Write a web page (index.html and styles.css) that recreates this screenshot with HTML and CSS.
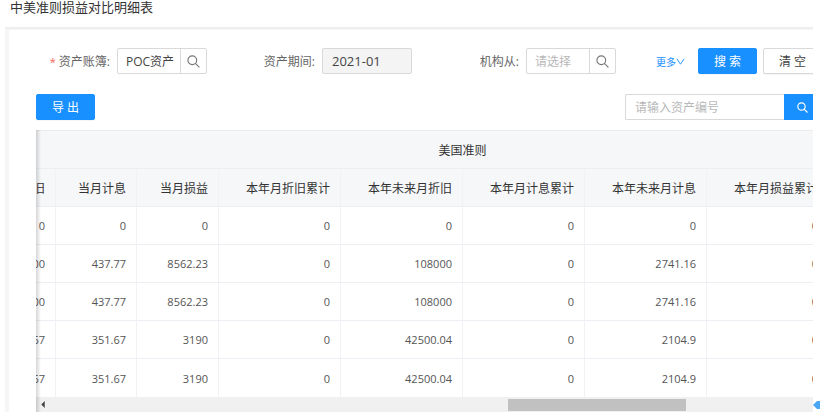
FILE: index.html
```html
<!DOCTYPE html>
<html lang="zh-CN">
<head>
  <meta charset="UTF-8">
  <meta name="viewport" content="width=device-width, initial-scale=1.0">
  <title>中美准则损益对比明细表</title>
  <link rel="stylesheet" href="styles.css">
</head>
<body>

  <h1 class="page-title">中美准则损益对比明细表</h1>

  <main class="page-body">
    <div class="panel">

      <!-- Filters -->
      <form class="filters">
        <div class="field">
          <label for="book"><span class="required">*</span> 资产账簿:</label>
          <div class="lookup">
            <input type="text" id="book" value="POC资产">
            <button type="button" aria-label="选择资产账簿">
              <svg class="icon" viewBox="0 0 14 14"><circle cx="5.7" cy="5.7" r="4.7"/><path d="M9 9L13.4 13.4"/></svg>
            </button>
          </div>
        </div>
        <div class="field">
          <label for="period">资产期间:</label>
          <input type="text" id="period" class="period" value="2021-01" disabled>
        </div>
        <div class="field">
          <label for="org">机构从:</label>
          <div class="lookup">
            <input type="text" id="org" placeholder="请选择">
            <button type="button" aria-label="选择机构">
              <svg class="icon" viewBox="0 0 14 14"><circle cx="5.7" cy="5.7" r="4.7"/><path d="M9 9L13.4 13.4"/></svg>
            </button>
          </div>
        </div>
        <div class="actions">
          <a href="#" class="more">更多<svg class="arrow" viewBox="0 0 10 10"><path d="M1 2L5 8L9 2"/></svg></a>
          <button type="submit" class="btn primary">搜 索</button>
          <button type="reset" class="btn">清 空</button>
        </div>
      </form>

      <!-- Toolbar -->
      <div class="toolbar">
        <button type="button" class="btn primary">导 出</button>
        <div class="search">
          <input type="text" placeholder="请输入资产编号" aria-label="资产编号">
          <button type="button" aria-label="搜索">
            <svg class="icon" viewBox="0 0 14 14"><circle cx="5.7" cy="5.7" r="4.7"/><path d="M9 9L13.4 13.4"/></svg>
          </button>
        </div>
      </div>

      <!-- Scrolled part of the table -->
      <div class="table-wrap">
        <table>
          <colgroup>
            <col class="narrow"><col class="narrow"><col class="medium">
            <col span="6" class="wide">
          </colgroup>
          <thead>
            <tr class="group"><th colspan="9">美国准则</th></tr>
            <tr>
              <th>当月折旧</th><th>当月计息</th><th>当月损益</th><th>本年月折旧累计</th>
              <th>本年未来月折旧</th><th>本年月计息累计</th><th>本年未来月计息</th><th>本年月损益累计</th><th></th>
            </tr>
          </thead>
          <tbody>
            <tr><td>0</td><td>0</td><td>0</td><td>0</td><td>0</td><td>0</td><td>0</td><td>0</td><td></td></tr>
            <tr><td>9000</td><td>437.77</td><td>8562.23</td><td>0</td><td>108000</td><td>0</td><td>2741.16</td><td>0</td><td></td></tr>
            <tr><td>9000</td><td>437.77</td><td>8562.23</td><td>0</td><td>108000</td><td>0</td><td>2741.16</td><td>0</td><td></td></tr>
            <tr><td>3541.67</td><td>351.67</td><td>3190</td><td>0</td><td>42500.04</td><td>0</td><td>2104.9</td><td>0</td><td></td></tr>
            <tr><td>3541.67</td><td>351.67</td><td>3190</td><td>0</td><td>42500.04</td><td>0</td><td>2104.9</td><td>0</td><td></td></tr>
          </tbody>
        </table>
        <div class="scrollbar">
          <svg class="scroll-left" viewBox="0 0 4 8"><path d="M4 0V8L0 4Z"/></svg>
          <div class="thumb"></div>
        </div>
      </div>

    </div>
  </main>

  <svg class="side-handle" viewBox="0 0 7 10"><path d="M0 5L4 1L7 1V9L4 9Z"/></svg>

</body>
</html>
```

FILE: styles.css
```css
* {
  box-sizing: border-box;
}

body {
  margin: 0;
  background-color: #fff;
  color: #555;
  font-family: "Open Sans", "Noto Sans CJK SC", sans-serif;
  font-size: 12px;
  overflow: hidden;
}

input,
button {
  font-family: inherit;
  font-size: 12px;
  color: #444;
}

.page-title {
  margin: 0;
  padding-left: 10px;
  height: 27px;
  font-size: 13px;
  font-weight: 400;
  line-height: 14px;
  color: #333;
}

.page-body {
  margin: 0 7px 0 5px;
  padding: 1px 0 0 4px;
  background-color: #f5f7f7;
  border-top: 2px solid #eee;
  overflow: hidden;
}

.panel {
  padding: 18px 0 0 27px;
  background-color: #fff;
  border-radius: 3px 0 0 0;
}

/* Filters */
.filters {
  display: grid;
  grid-template-columns: 171fr 205fr 204fr 197px;
  margin-bottom: 20px;
}

.field {
  display: flex;
  align-items: center;
  justify-content: flex-end;
  white-space: nowrap;
}

.field label {
  margin-right: 7px;
  color: #666;
}

.required {
  color: #f5655f;
  font-size: 11px;
}

.lookup,
.period {
  width: 90px;
  height: 26px;
  border: 1px solid #d9d9d9;
  border-radius: 2px;
}

.lookup {
  display: flex;
}

.lookup input {
  flex: 1;
  min-width: 0;
  padding: 0 0 0 8px;
  border: none;
  background: none;
}

.lookup button {
  display: flex;
  align-items: center;
  justify-content: center;
  width: 26px;
  padding: 0;
  background: none;
  border: none;
  border-left: 1px solid #d9d9d9;
}

.period {
  padding: 0 9px;
  background-color: #f4f4f4;
  font-size: 13px;
  color: #444;
}

input::placeholder {
  color: #b8b8b8;
}

.icon {
  width: 13px;
  height: 13px;
  fill: none;
  stroke: #777;
  stroke-width: 1.2;
}

.actions {
  display: flex;
  align-items: center;
  padding-left: 40px;
}

.more {
  flex: none;
  display: flex;
  align-items: center;
  width: 36px;
  margin-right: 6px;
  font-size: 10px;
  color: #1890ff;
  text-decoration: none;
}

.arrow {
  width: 9px;
  height: 9px;
  fill: none;
  stroke: #1890ff;
}

.btn {
  flex: none;
  width: 59px;
  height: 26px;
  padding: 0;
  background-color: #fff;
  border: 1px solid #d9d9d9;
  border-radius: 2px;
  box-shadow: 0 1px 0 rgba(0, 0, 0, 0.04);
}

.btn + .btn {
  margin-left: 6px;
}

.primary {
  background-color: #1890ff;
  border-color: #1890ff;
  color: #fff;
}

/* Toolbar */
.toolbar {
  display: flex;
  justify-content: space-between;
  margin-bottom: 10px;
}

.search {
  display: flex;
  width: 188px;
}

.search input {
  flex: none;
  width: 159px;
  height: 26px;
  padding: 0 9px;
  border: 1px solid #d9d9d9;
  border-right: none;
  border-radius: 2px 0 0 2px;
}

.search button {
  flex: none;
  display: flex;
  align-items: center;
  justify-content: center;
  width: 36px;
  height: 26px;
  padding: 0;
  background-color: #1890ff;
  border: none;
}

.search .icon {
  width: 11px;
  height: 11px;
  stroke: #fff;
  stroke-width: 1.5;
}

/* Table */
.table-wrap {
  position: relative;
  overflow: hidden;
}

/* shadow of the fixed columns */
.table-wrap::before {
  content: "";
  position: absolute;
  top: 0;
  bottom: 0;
  left: 0;
  width: 5px;
  background: linear-gradient(to right, rgba(0, 0, 0, 0.16), rgba(0, 0, 0, 0));
}

table {
  width: 976px;
  margin-left: -61px;
  table-layout: fixed;
  border-collapse: separate;
  border-spacing: 0;
}

.narrow {
  width: 81px;
}

.medium {
  width: 82px;
}

.wide {
  width: 122px;
}

th,
td {
  height: 38px;
  padding: 0 10px;
  border-right: 1px solid #f0f2f4;
  border-bottom: 1px solid #ebeff4;
  text-align: right;
  white-space: nowrap;
}

th {
  background-color: #f6f7f9;
  font-weight: 400;
  color: #333;
}

td {
  font-size: 11px;
}

.group th {
  height: 39px;
  border-top: 1px solid #ececec;
  text-align: center;
}

tbody tr:last-child td {
  border-bottom: none;
}

.scrollbar {
  display: flex;
  align-items: center;
  height: 15px;
  padding-left: 5px;
  background-color: #f0f0f0;
}

.scroll-left {
  width: 4px;
  height: 7px;
  fill: #444;
}

.thumb {
  width: 23%;
  height: 12px;
  margin-left: 60%;
  background-color: #c1c1c1;
}

.side-handle {
  position: fixed;
  right: 0;
  bottom: 2px;
  width: 7px;
  height: 10px;
  fill: #4aa5f5;
}
```
